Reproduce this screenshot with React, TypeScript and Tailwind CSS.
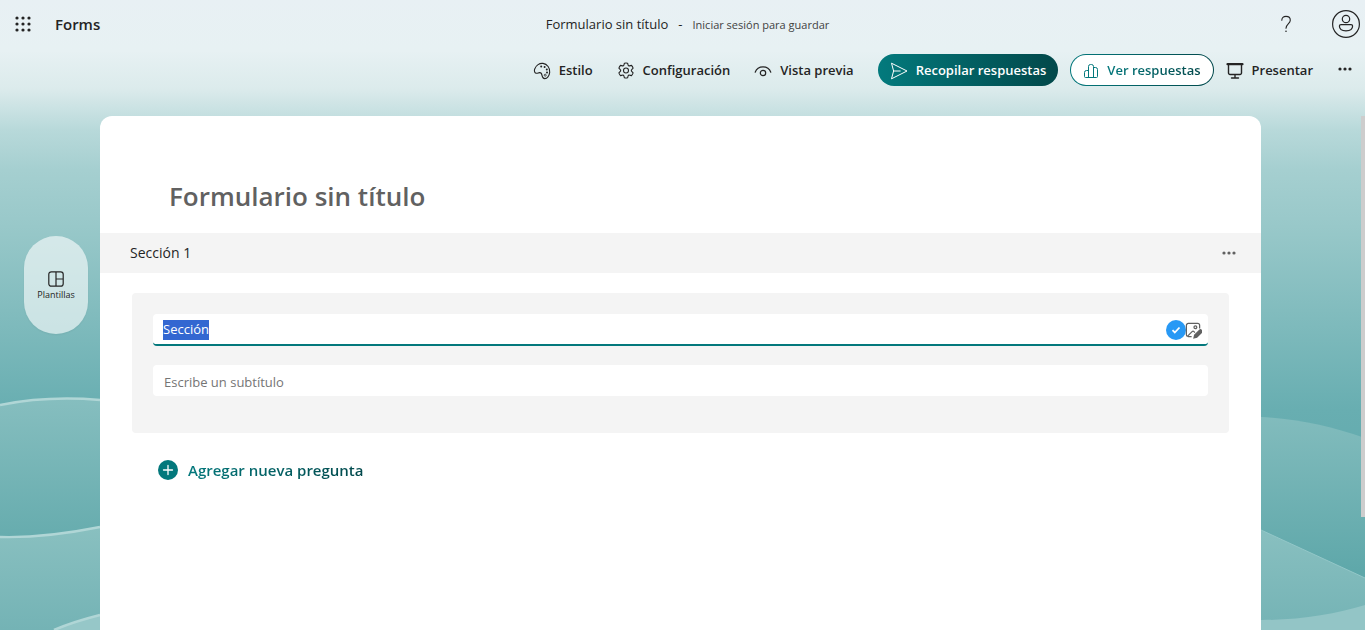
import { useEffect, useRef, useState } from "react"
import type { ReactNode } from "react"

type IconProps = {
	className?: string;
};

type ToolbarButtonProps = {
	icon: ReactNode;
	label: string;
};

const WaffleIcon = ({ className }: IconProps) => (
	<svg className={className} viewBox="0 0 16 16" fill="currentColor" aria-hidden="true">
		{[2, 8, 14].map((y) =>
			[2, 8, 14].map((x) => <circle key={`${x}-${y}`} cx={x} cy={y} r="1.6" />)
		)}
	</svg>
)

const PaletteIcon = ({ className }: IconProps) => (
	<svg className={className} viewBox="0 0 18 18" fill="none" stroke="currentColor" strokeWidth="1.1" aria-hidden="true">
		<path d="M1.6 7.2C3 3.2 6.600 .9 10 1.400c4.200.6 7.200 4.600 6.700 9-.4 3.500-2.600 6.300-5 6.200-2.100-.1-2.400-1.600-2.700-3.300-.3-1.800-.8-2.900-2.500-2.700-1.300.2-1.900.8-3.100.7-1.600-.2-2.400-2-1.800-4.100Z" />
		<g fill="currentColor" stroke="none">
			<circle cx="8.200" cy="4.600" r="1" />
			<circle cx="11.600" cy="5" r="1" />
			<circle cx="13.800" cy="7.400" r="1" />
			<circle cx="14" cy="10.600" r="1" />
		</g>
		<circle cx="12.200" cy="13.200" r="1" strokeWidth=".8" />
	</svg>
)

const GearIcon = ({ className }: IconProps) => (
	<svg className={className} viewBox="0 0 18 18" fill="none" stroke="currentColor" strokeWidth="1.100" strokeLinejoin="round" aria-hidden="true">
		<path d="M7.400 1.200a8 8 0 0 1 3.200 0l.5 1.900c.2.600.8.900 1.400.8l2-.5a8 8 0 0 1 1.600 2.700l-1.400 1.500c-.5.500-.5 1.200 0 1.700l1.400 1.500a8 8 0 0 1-1.600 2.800l-2-.5c-.6-.2-1.200.2-1.400.8l-.5 1.900a8 8 0 0 1-3.200 0l-.5-1.900c-.2-.6-.8-1-1.400-.8l-2 .5a8 8 0 0 1-1.600-2.800l1.400-1.500c.5-.5.5-1.200 0-1.700L1.900 6.100a8 8 0 0 1 1.600-2.700l2 .5c.6.100 1.200-.2 1.400-.8Z" />
		<circle cx="9" cy="8.500" r="2.500" />
	</svg>
)

const EyeIcon = ({ className }: IconProps) => (
	<svg className={className} viewBox="0 0 18 18" fill="none" stroke="currentColor" strokeWidth="1.200" strokeLinecap="round" aria-hidden="true">
		<path d="M1.200 10.200C2.400 6.900 5.400 4.900 9 4.900s6.600 2 7.800 5.300" />
		<circle cx="9" cy="11" r="2.700" />
	</svg>
)

const SendIcon = ({ className }: IconProps) => (
	<svg className={className} viewBox="0 0 18 18" fill="none" stroke="currentColor" strokeWidth="1" strokeLinejoin="round" aria-hidden="true">
		<path d="M1.500 1.200 17 9 1.500 16.800 3.600 9Z" />
		<path d="M3.600 9h7" />
	</svg>
)

const ChartIcon = ({ className }: IconProps) => (
	<svg className={className} viewBox="0 0 16 16" fill="none" stroke="currentColor" strokeWidth="1" strokeLinejoin="round" aria-hidden="true">
		<path d="M5.500 14.500v-11a2 2 0 0 1 2-2h1a2 2 0 0 1 2 2v11" />
		<path d="M5.500 7.500h-2a2 2 0 0 0-2 2v4a1 1 0 0 0 1 1h11a1 1 0 0 0 1-1v-7a2 2 0 0 0-2-2h-2" />
	</svg>
)

const PresentIcon = ({ className }: IconProps) => (
	<svg className={className} viewBox="0 0 18 18" fill="none" stroke="currentColor" strokeWidth="1.400" strokeLinecap="round" aria-hidden="true">
		<path d="M1.500 2.200h15" strokeWidth="2.200" />
		<path d="M2.500 3v8a1.500 1.500 0 0 0 1.500 1.500h10a1.500 1.500 0 0 0 1.500-1.500V3M9 12.500v3M5.500 16h7" />
	</svg>
)

const MoreIcon = ({ className }: IconProps) => (
	<svg className={className} viewBox="0 0 16 16" fill="currentColor" aria-hidden="true">
		<circle cx="3" cy="8" r="1.600" />
		<circle cx="8" cy="8" r="1.600" />
		<circle cx="13" cy="8" r="1.600" />
	</svg>
)

const HelpIcon = ({ className }: IconProps) => (
	<svg className={className} viewBox="0 0 12 18" fill="none" stroke="currentColor" strokeWidth="1.100" strokeLinecap="round" aria-hidden="true">
		<path d="M1.800 5.200C1.800 2.600 3.400 1.400 6 1.400s4.300 1.500 4.300 3.800c0 3.300-4.300 4.200-4.300 8" />
		<circle cx="6" cy="16.200" r=".8" fill="currentColor" stroke="none" />
	</svg>
)

const PersonIcon = ({ className }: IconProps) => (
	<svg className={className} viewBox="0 0 28 28" fill="none" stroke="currentColor" strokeWidth="1.200" aria-hidden="true">
		<circle cx="14" cy="14" r="13.400" />
		<circle cx="14" cy="9" r="3.700" />
		<path d="M9 14.600h10c.9 0 1.600.6 1.600 1.400 0 3-2.600 4.800-6.600 4.800S7.400 19 7.400 16c0-.8.7-1.400 1.600-1.400Z" />
	</svg>
)

const TemplateIcon = ({ className }: IconProps) => (
	<svg className={className} viewBox="0 0 16 16" fill="none" stroke="currentColor" strokeWidth="1.200" aria-hidden="true">
		<rect x=".8" y=".8" width="14.400" height="14.400" rx="2.500" />
		<path d="M8 1v14M8 8h7" />
	</svg>
)

const ImageEditIcon = ({ className }: IconProps) => (
	<svg className={className} viewBox="0 0 18 18" fill="none" stroke="currentColor" strokeWidth="1.300" aria-hidden="true">
		<path d="M15.500 7V3.500a2 2 0 0 0-2-2h-10a2 2 0 0 0-2 2v10c0 .7.400 1.400 1 1.700M2.500 15.200l5-5c.6-.6 1.400-.6 2 0l1 1M3 15.500h4" />
		<circle cx="11" cy="5.500" r="1.500" />
		<path d="m9.500 16.800.7-3 5-5a1.600 1.600 0 0 1 2.300 2.300l-5 5Z" fill="currentColor" />
	</svg>
)

const WaveBackground = () => (
	<svg className="absolute inset-0 -z-10 h-full w-full" viewBox="0 0 1365 630" preserveAspectRatio="none" fill="none" aria-hidden="true">
		<defs>
			<linearGradient id="sky" x1="0" y1="0" x2="0" y2="630" gradientUnits="userSpaceOnUse">
				<stop offset="0" stopColor="#e8f0f4" />
				<stop offset=".08" stopColor="#e7f1f3" />
				<stop offset=".14" stopColor="#dcebec" />
				<stop offset=".206" stopColor="#b8d9da" />
				<stop offset=".27" stopColor="#a5cfd0" />
				<stop offset=".36" stopColor="#98c8c9" />
				<stop offset=".65" stopColor="#68aeb1" />
				<stop offset="1" stopColor="#55a2a5" />
			</linearGradient>
			<linearGradient id="upper" x1="0" y1="398" x2="0" y2="570" gradientUnits="userSpaceOnUse">
				<stop offset="0" stopColor="#86bebf" />
				<stop offset="1" stopColor="#5fa8aa" />
			</linearGradient>
			<linearGradient id="lower" x1="0" y1="527" x2="0" y2="630" gradientUnits="userSpaceOnUse">
				<stop offset="0" stopColor="#89c0c0" />
				<stop offset="1" stopColor="#74b3b5" />
			</linearGradient>
		</defs>
		<rect width="1365" height="630" fill="url(#sky)" />
		<path d="M0 405C30 399 65 397 100 400H700V630H0Z" fill="url(#upper)" />
		<path d="M0 537C35 538 65 534 100 527H700V630H0Z" fill="url(#lower)" />
		<path d="M54 630C68 624 84 619 100 615V630Z" fill="#96c7c8" />
		<g stroke="#b0d6d6" strokeWidth="2.500">
			<path d="M0 405C30 399 65 397 100 400" />
			<path d="M0 537C35 538 65 534 100 527" />
			<path d="M54 630C68 624 84 619 100 615" />
		</g>
		<path d="M700 417H1261C1298 419 1330 426 1365 438V630H700Z" fill="url(#upper)" />
		<path d="M700 530H1261L1365 578V630H700Z" fill="url(#lower)" />
		<path d="M1261 530 1365 578" stroke="#93c7c8" />
		<path d="M1261 620C1300 620 1335 614 1365 605V630H1261Z" fill="#93c5c6" />
	</svg>
)

const ToolbarButton = ({ icon, label }: ToolbarButtonProps) => (
	<button type="button" className="flex h-8 items-center gap-2 px-3 pt-[2px] font-semibold">
		{icon}
		{label}
	</button>
)

export default function App() {
	const [section, setSection] = useState("Sección")
	const [subtitle, setSubtitle] = useState("")
	const sectionRef = useRef<HTMLInputElement>(null)

	useEffect(() => {
		sectionRef.current?.focus()
		sectionRef.current?.select()
	}, [])

	return (
		<div className="relative isolate flex h-screen flex-col overflow-hidden font-['Open_Sans','Noto_Sans',sans-serif] text-[13px] text-[#242424]">
			<WaveBackground />

			{/* Header */}
			<header className="grid h-12 shrink-0 grid-cols-[1fr_auto_1fr] items-center pr-[5px] pl-[15px]">
				<div className="flex items-center gap-6">
					<button type="button" aria-label="Iniciador de aplicaciones">
						<WaffleIcon className="size-4" />
					</button>
					<span className="text-[15px] font-semibold">Forms</span>
				</div>
				<div className="flex items-center gap-[10px] pt-[2px]">
					<span>Formulario sin título</span>
					<span>-</span>
					<span className="text-[11px] text-[#424242]">Iniciar sesión para guardar</span>
				</div>
				<div className="flex items-center justify-end gap-10">
					<button type="button" aria-label="Ayuda">
						<HelpIcon className="h-[18px] w-3" />
					</button>
					<button type="button" aria-label="Cuenta">
						<PersonIcon className="size-7" />
					</button>
				</div>
			</header>

			{/* Toolbar */}
			<nav className="flex h-[68px] shrink-0 items-start justify-end pt-[6px] pr-3">
				<ToolbarButton icon={<PaletteIcon className="size-[18px]" />} label="Estilo" />
				<ToolbarButton icon={<GearIcon className="size-[18px]" />} label="Configuración" />
				<ToolbarButton icon={<EyeIcon className="size-[18px]" />} label="Vista previa" />
				<button
					type="button"
					className="ml-3 flex h-8 items-center gap-2 rounded-full bg-linear-to-r from-[#037a7d] to-[#02484a] px-3 pt-[2px] font-semibold text-white"
				>
					<SendIcon className="size-[18px]" />
					Recopilar respuestas
				</button>
				<div className="ml-3 flex h-8 rounded-full bg-linear-to-r from-[#03787c] to-[#02494c] p-px">
					<button type="button" className="flex items-center gap-2 rounded-full bg-white px-3 pt-[2px] font-semibold">
						<ChartIcon className="size-4 text-[#03787c]" />
						<span className="bg-linear-to-r from-[#03787c] to-[#02494c] bg-clip-text text-transparent">
							Ver respuestas
						</span>
					</button>
				</div>
				<ToolbarButton icon={<PresentIcon className="size-[18px]" />} label="Presentar" />
				<button type="button" aria-label="Más opciones" className="ml-3 flex h-[30px] items-center">
					<MoreIcon className="size-4" />
				</button>
			</nav>

			<main className="flex min-h-0 flex-1">
				<aside className="w-[100px] shrink-0 pt-[120px] pl-6">
					<button
						type="button"
						className="flex h-[98px] w-16 flex-col items-center justify-center gap-[2px] rounded-full bg-white/60 pt-[2px] text-[9px] leading-3 shadow-xs"
					>
						<TemplateIcon className="size-4" />
						Plantillas
					</button>
				</aside>

				{/* Form */}
				<section className="flex-1 rounded-t-xl bg-white">
					<h1 className="px-[69px] pt-[60px] pb-[17px] text-[26px] leading-10 font-semibold text-[#616161]">
						Formulario sin título
					</h1>
					<div className="flex h-10 items-center justify-between bg-[#f4f4f4] pr-6 pl-[30px]">
						<h2 className="text-sm">Sección 1</h2>
						<button type="button" aria-label="Opciones de sección">
							<MoreIcon className="size-4 text-[#616161]" />
						</button>
					</div>
					<div className="mx-8 mt-5 h-[140px] rounded-sm bg-[#f4f4f4] px-[21px] pt-[21px]">
						<div className="flex h-8 items-center overflow-hidden rounded-sm border-b-2 border-[#03787c] bg-white pt-[2px] pr-[6px] pl-[10px]">
							<input
								ref={sectionRef}
								aria-label="Título de la sección"
								className="min-w-0 flex-1 outline-none selection:bg-[#3367d1] selection:text-white"
								value={section}
								onChange={(e) => setSection(e.target.value)}
							/>
							<span className="flex size-5 items-center justify-center rounded-full bg-[#2899f5] text-white">
								<svg className="size-[10px]" viewBox="0 0 10 10" fill="none" stroke="currentColor" strokeWidth="1.800" aria-hidden="true">
									<path d="m1.500 5.200 2.300 2.300 4.700-5" />
								</svg>
							</span>
							<button type="button" aria-label="Insertar imagen" className="-ml-px text-[#616161]">
								<ImageEditIcon className="size-[17px]" />
							</button>
						</div>
						<input
							aria-label="Subtítulo"
							placeholder="Escribe un subtítulo"
							className="mt-[19px] h-[31px] w-full rounded-sm bg-white px-[11px] pt-[2px] outline-none placeholder:text-[#757575]"
							value={subtitle}
							onChange={(e) => setSubtitle(e.target.value)}
						/>
					</div>
					<button type="button" className="mt-[25px] ml-[58px] flex items-center gap-[10px] text-[15px] leading-6 font-semibold">
						<svg className="size-5" viewBox="0 0 20 20" aria-hidden="true">
							<circle cx="10" cy="10" r="10" fill="#03787c" />
							<path d="M10 5.500v9M5.500 10h9" stroke="#fff" strokeWidth="1.300" strokeLinecap="round" />
						</svg>
						<span className="bg-linear-to-r from-[#03787c] to-[#02494c] bg-clip-text text-transparent">
							Agregar nueva pregunta
						</span>
					</button>
				</section>

				<div className="flex w-[104px] shrink-0 justify-end">
					<div className="h-[78%] w-1 bg-[#cdcdcd]" />
				</div>
			</main>
		</div>
	)
}
